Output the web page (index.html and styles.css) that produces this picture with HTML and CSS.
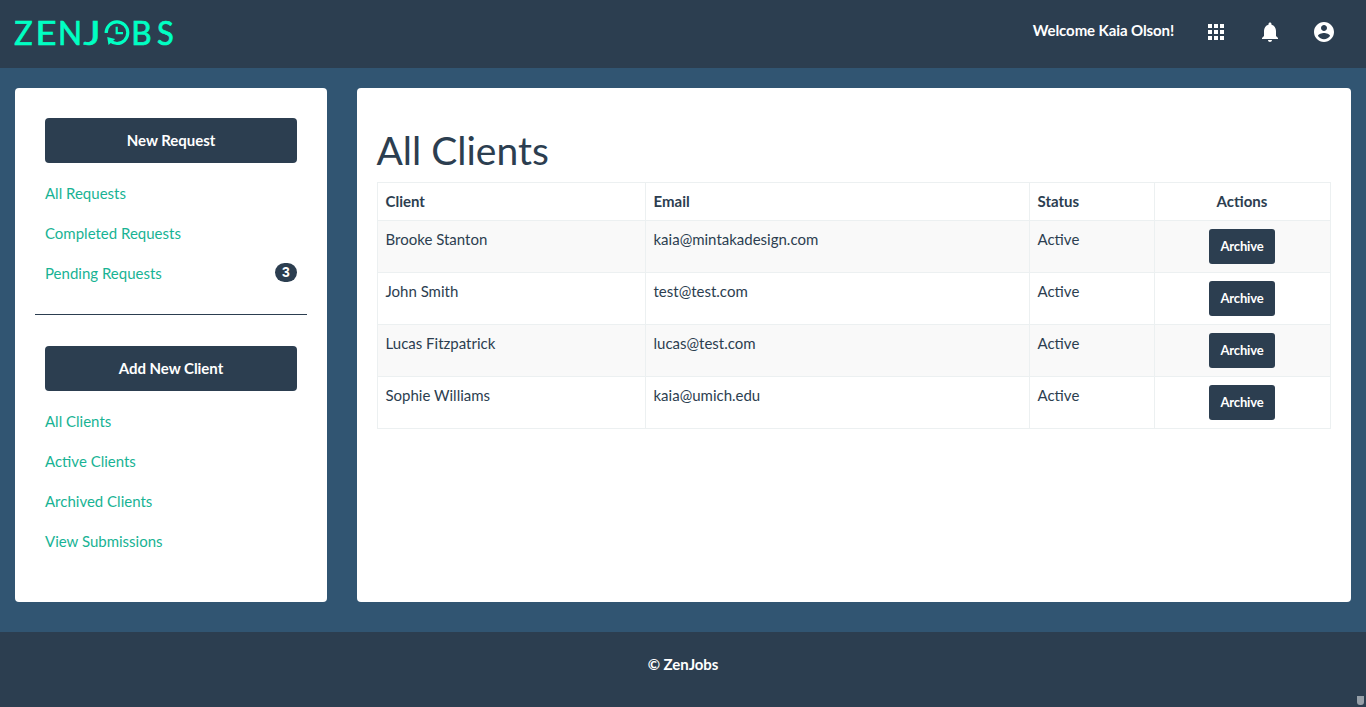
FILE: index.html
```html
<!DOCTYPE html>
<html lang="en">
<head>
<meta charset="utf-8">
<title>ZenJobs</title>
<link rel="stylesheet" href="styles.css">
</head>
<body>
<header class="topbar">
  <svg class="logo" width="162" height="30" viewBox="0 0 162 30" role="img" aria-label="ZenJobs">
    <text class="logo-text" transform="translate(0.300 27.500) scale(0.940 1)">Z</text>
    <text class="logo-text" transform="translate(21.400 27.500) scale(1.120 1)">E</text>
    <text class="logo-text" transform="translate(43.900 27.500) scale(0.970 1)">N</text>
    <text class="logo-text" transform="translate(69.500 27.500) scale(1.250 1)">J</text>
    <text class="logo-text" transform="translate(117.300 27.500) scale(0.970 1)">B</text>
    <text class="logo-text" transform="translate(143 27.500) scale(0.950 1)">S</text>
    <g fill="none" stroke="#00ffc3" stroke-width="3.200">
      <path d="M92.200 16A10.800 10.800 0 1 1 103 26.500Q99.500 26.500 96.500 24"/>
      <path d="M102.700 9.700V16.200H109" stroke-width="2.200"/>
    </g>
    <path d="M93.200 20L101.200 22L94.500 28Z" fill="#00ffc3"/>
  </svg>
  <nav class="topnav">
    <span class="welcome">Welcome Kaia Olson!</span>
    <svg class="nav-icon" viewBox="0 0 24 24"><path d="M4 8h4V4H4v4zm6 12h4v-4h-4v4zm-6 0h4v-4H4v4zm0-6h4v-4H4v4zm6 0h4v-4h-4v4zm6-10v4h4V4h-4zm-6 4h4V4h-4v4zm6 6h4v-4h-4v4zm0 6h4v-4h-4v4z"/></svg>
    <svg class="nav-icon" viewBox="0 0 24 24"><path d="M12 22c1.100 0 2-.9 2-2h-4c0 1.100.89 2 2 2zm6-6v-5c0-3.070-1.640-5.640-4.500-6.320V4c0-.83-.67-1.500-1.500-1.500s-1.500.67-1.500 1.500v.68C7.630 5.360 6 7.920 6 11v5l-2 2v1h16v-1l-2-2z"/></svg>
    <svg class="nav-icon" viewBox="0 0 24 24"><path d="M12 2C6.480 2 2 6.480 2 12s4.480 10 10 10 10-4.480 10-10S17.520 2 12 2zm0 3c1.660 0 3 1.340 3 3s-1.340 3-3 3-3-1.340-3-3 1.340-3 3-3zm0 14.200c-2.500 0-4.710-1.280-6-3.220.03-1.990 4-3.080 6-3.080 1.990 0 5.970 1.090 6 3.080-1.290 1.940-3.500 3.220-6 3.220z"/></svg>
  </nav>
</header>
<main class="layout">
  <aside class="panel sidebar">
    <button class="btn btn-block">New Request</button>
    <ul class="links">
      <li><a href="#">All Requests</a></li>
      <li><a href="#">Completed Requests</a></li>
      <li><a href="#">Pending Requests</a><span class="badge">3</span></li>
    </ul>
    <hr class="divider">
    <button class="btn btn-block">Add New Client</button>
    <ul class="links">
      <li><a href="#">All Clients</a></li>
      <li><a href="#">Active Clients</a></li>
      <li><a href="#">Archived Clients</a></li>
      <li><a href="#">View Submissions</a></li>
    </ul>
  </aside>
  <section class="panel content">
    <h1 class="title">All Clients</h1>
    <table class="clients">
      <colgroup><col class="col-client"><col class="col-email"><col class="col-status"><col class="col-actions"></colgroup>
      <thead>
        <tr><th>Client</th><th>Email</th><th>Status</th><th class="center">Actions</th></tr>
      </thead>
      <tbody>
        <tr><td>Brooke Stanton</td><td>kaia@mintakadesign.com</td><td>Active</td><td class="center"><button class="btn btn-sm">Archive</button></td></tr>
        <tr><td>John Smith</td><td>test@test.com</td><td>Active</td><td class="center"><button class="btn btn-sm">Archive</button></td></tr>
        <tr><td>Lucas Fitzpatrick</td><td>lucas@test.com</td><td>Active</td><td class="center"><button class="btn btn-sm">Archive</button></td></tr>
        <tr><td>Sophie Williams</td><td>kaia@umich.edu</td><td>Active</td><td class="center"><button class="btn btn-sm">Archive</button></td></tr>
      </tbody>
    </table>
  </section>
</main>
<footer class="footer">© ZenJobs<span class="corner-tab"></span></footer>
</body>
</html>
```
FILE: styles.css
```css
* { box-sizing: border-box; }
body {
  margin: 0;
  height: 707px;
  display: flex;
  flex-direction: column;
  overflow: hidden;
  background: #315572;
  color: #2c3e50;
  font: 15px/21px Lato, sans-serif;
}
.topbar {
  height: 68px;
  padding: 0 30px 0 14px;
  display: flex;
  justify-content: space-between;
  background: #2c3e50;
}
.logo { margin-top: 17px; overflow: visible; }
.logo-text { font: 32.500px Lato, sans-serif; fill: #00ffc3; stroke: #00ffc3; stroke-width: 0.700px; }
.topnav { display: flex; align-items: flex-start; gap: 30px; padding-top: 20px; }
.welcome { color: #fff; font-weight: 700; letter-spacing: -0.100px; }
.nav-icon { width: 24px; height: 24px; fill: #fff; }
.layout {
  height: 564px;
  padding: 20px 15px 30px;
  display: grid;
  grid-template-columns: 312px 994px;
  gap: 30px;
}
.panel { background: #fff; border-radius: 4px; }
.sidebar { padding: 30px 20px; }
.content { padding: 41px 20px; }
.btn {
  border: 0;
  color: #fff;
  background: #2c3e50;
  font: 700 15px/21px Lato, sans-serif;
}
.btn-block { display: block; width: 252px; height: 45px; margin: 0 10px; border-radius: 4px; letter-spacing: -0.040px; }
.btn-sm { display: block; width: 66px; height: 35px; margin: 0 auto; padding: 0; border-radius: 3px; font-size: 13px; letter-spacing: -0.150px; }
.links { list-style: none; margin: 20px 10px 0; padding: 0; }
.links li { display: flex; justify-content: space-between; height: 40px; }
.links a { color: #18b394; text-decoration: none; }
.badge {
  width: 22px;
  height: 19px;
  border-radius: 10px;
  background: #2c3e50;
  color: #fff;
  font: 700 14px/19px "Liberation Sans", sans-serif;
  text-align: center;
}
.divider { height: 1px; border: 0; margin: 11px 0 31px; background: #2c3e50; }
.title { margin: 0 0 10px -0.500px; font-size: 39px; line-height: 43px; font-weight: 400; }
.clients { width: 954px; table-layout: fixed; border-collapse: collapse; }
.col-client { width: 268px; }
.col-email { width: 384px; }
.col-status { width: 125px; }
.col-actions { width: 176px; }
.clients th, .clients td {
  padding: 8px 8px 8px 7.500px;
  border: 1px solid #ecf0f1;
  text-align: left;
  vertical-align: top;
}
.clients .center { padding-left: 7px; text-align: center; }
.clients tbody tr:nth-child(odd) { background: #f9f9f9; }
.footer {
  position: relative;
  flex: 1;
  padding-top: 22px;
  background: #2c3e50;
  color: #fff;
  font-weight: 700;
  letter-spacing: -0.050px;
  text-align: center;
}
.corner-tab {
  position: absolute;
  right: 2px;
  bottom: 2px;
  width: 7px;
  height: 9px;
  border-radius: 0 0 3px 3px;
  background: #969fa8;
}
```
